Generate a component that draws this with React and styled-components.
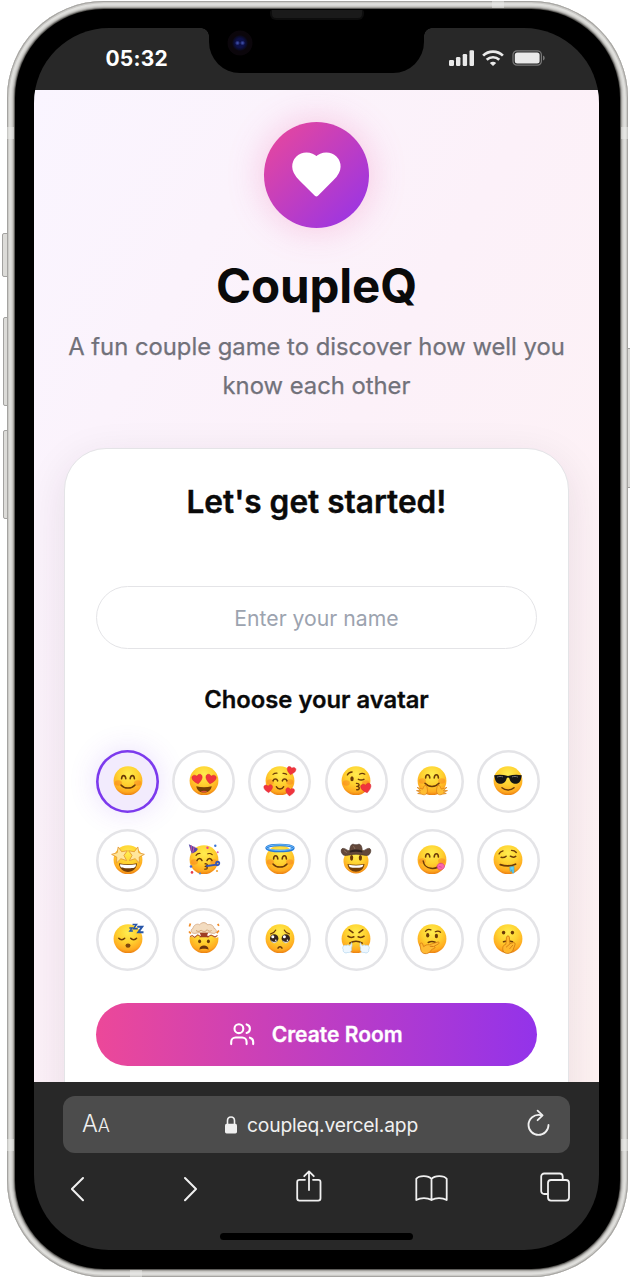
import React from "react";
import styled, { createGlobalStyle, css } from "styled-components";
import { Users } from "lucide-react";

const GlobalStyle = createGlobalStyle`
  *, *::before, *::after { box-sizing: border-box; }
  html, body { margin: 0; background: #fff; }
  body { font-family: Inter, "Liberation Sans", sans-serif; color: #0a0a0a; overflow: hidden; }
  svg { display: block; flex: none; }
`;

/* ---------- Device ---------- */

const Stage = styled.div`
  position: relative;
  width: 630px;
  height: 1277px;
  padding: 1px 0 0 7px;
  overflow: hidden;
`;

const Chassis = styled.div`
  position: relative;
  width: 621px;
  height: 1275.5px;
  padding: 8px;
  border-radius: 97px;
  background: #d6d5d2;
  box-shadow: inset 0 0 0 1px #a5a4a1, inset 0 0 0 2.2px #cbcac7,
    inset 0 0 2px 4.5px #e2e2df, inset 0 0 0 7px #cccbc8;
`;

const Bezel = styled.div`
  width: 100%;
  height: 100%;
  padding: 19px 20px 18.5px 19px;
  border-radius: 89px;
  background: #000;
  box-shadow: 0 0 2px 0.5px #33322f;
`;

const SideKey = styled.div`
  position: absolute;
  left: ${(p) => p.$x}px;
  top: ${(p) => p.$y}px;
  width: 7px;
  height: ${(p) => p.$h}px;
  border: 1px solid #a3a2a0;
  border-radius: 2px;
  background: #dcdbd8;
`;

const Seam = styled.div`
  position: absolute;
  left: ${(p) => p.$x}px;
  top: ${(p) => p.$y}px;
  width: ${(p) => p.$w || 7}px;
  height: ${(p) => p.$h || 12}px;
  background: rgba(235, 235, 233, 0.5);
`;

const Screen = styled.div`
  position: relative;
  display: flex;
  flex-direction: column;
  width: 565px;
  height: 1222px;
  border-radius: 75px;
  overflow: hidden;
  background: #282828;
`;

const Speaker = styled.div`
  position: absolute;
  left: 263px;
  top: 9px;
  width: 94px;
  height: 10px;
  border: 2px solid #0d0d0d;
  border-top: 0;
  border-radius: 2px 2px 6px 6px;
  background: #1a1a1a;
`;

const Notch = styled.div`
  position: absolute;
  left: 175px;
  top: -1px;
  width: 215px;
  height: 46px;
  border-radius: 0 0 31px 31px;
  background: #000;

  &::before,
  &::after {
    content: "";
    position: absolute;
    top: 1px;
    width: 8px;
    height: 8px;
  }
  &::before {
    left: -8px;
    background: radial-gradient(circle at 0 100%, transparent 7.5px, #000 8px);
  }
  &::after {
    right: -8px;
    background: radial-gradient(circle at 100% 100%, transparent 7.5px, #000 8px);
  }
`;

const Camera = styled.div`
  position: absolute;
  left: 18px;
  top: 3px;
  width: 26px;
  height: 26px;
  border-radius: 50%;
  background: radial-gradient(circle at 10.5px 13px, #3948a0 0 0.6px, transparent 2.5px),
    radial-gradient(circle at 15.5px 13px, #3948a0 0 0.6px, transparent 2.5px),
    radial-gradient(circle, #0d1048 0 4.5px, #0a0a20 7px, #0b060b 8px 12px, #000 13px);
`;

/* ---------- Status bar ---------- */

const StatusBar = styled.div`
  display: flex;
  justify-content: space-between;
  flex: none;
  height: 62px;
  padding: 18px 53px 0 71.5px;
`;

const Clock = styled.div`
  font-size: 21px;
  line-height: 26px;
  font-weight: 650;
  letter-spacing: 0.2px;
  color: #fff;
`;

const StatusIcons = styled.div`
  display: flex;
  align-items: flex-start;
  gap: 7px;
  padding-top: 4px;

  svg:last-child { margin-left: 1.5px; }
`;

/* ---------- Web page ---------- */

const Page = styled.main`
  display: flex;
  flex-direction: column;
  align-items: center;
  flex: none;
  height: 992px;
  padding: 32px 30px 0;
  overflow: hidden;
  background: linear-gradient(to bottom right, #faf5ff, #fcf1f9 45%, #fef2f2);
`;

const Logo = styled.div`
  display: grid;
  place-items: center;
  flex: none;
  width: 105.5px;
  height: 105.5px;
  border-radius: 50%;
  background: linear-gradient(135deg, #ec4899, #9333ea);
  box-shadow: 0 0 36px rgba(236, 72, 153, 0.28);

  svg { margin-top: -1px; }
`;

const Title = styled.h1`
  margin: 31px 0 0;
  font-size: 47.5px;
  line-height: 53px;
  font-weight: 700;
  letter-spacing: -0.15px;
`;

const Tagline = styled.p`
  width: 505px;
  margin: 15.5px 0 0;
  font-size: 23.8px;
  line-height: 39px;
  text-align: center;
  color: #71717a;
  -webkit-text-stroke: 0.25px #71717a;
`;

const Card = styled.section`
  display: flex;
  flex-direction: column;
  align-items: center;
  flex: none;
  width: 505px;
  height: 760px;
  margin-top: 42.5px;
  padding: 32px 31px 0;
  border: 1px solid #e4e4e7;
  border-radius: 42px;
  background: #fff;
  box-shadow: 0 11px 42px rgba(50, 25, 50, 0.1);
`;

const CardTitle = styled.h2`
  margin: 0;
  font-size: 31.6px;
  line-height: 42px;
  font-weight: 600;
  -webkit-text-stroke: 0.4px #0a0a0a;
`;

const NameInput = styled.input`
  flex: none;
  width: 441px;
  height: 63px;
  margin-top: 63.5px;
  border: 1.3px solid #e4e4e7;
  border-radius: 32px;
  outline: 0;
  background: #fff;
  font: 400 21.2px Inter, sans-serif;
  text-align: center;

  &::placeholder {
    color: #9ca3af;
    opacity: 1;
  }
`;

const Label = styled.h3`
  margin: 34px 0 32.5px;
  font-size: 23.8px;
  line-height: 34px;
  font-weight: 600;
  -webkit-text-stroke: 0.3px #0a0a0a;
`;

const AvatarGrid = styled.div`
  display: grid;
  grid-template-columns: repeat(6, 63px);
  gap: 16px 13.2px;
  align-self: flex-start;
`;

const Avatar = styled.button`
  display: grid;
  place-items: center;
  width: 63px;
  height: 63px;
  padding: 0;
  border: 0;
  border-radius: 50%;
  background: #fff;
  box-shadow: inset 0 0 0 2.6px #e4e4e7;
  ${(p) =>
    p.$selected &&
    css`
      background: #f2ebfd;
      box-shadow: inset 0 0 0 2.6px #7c3aed, 0 0 28px rgba(124, 58, 237, 0.17);
    `}
`;

const CreateButton = styled.button`
  display: flex;
  align-items: center;
  justify-content: center;
  flex: none;
  gap: 16px;
  width: 441px;
  height: 63px;
  margin-top: 32.5px;
  padding: 0 1px 0 0;
  border: 0;
  border-radius: 32px;
  background: linear-gradient(to right, #ec4899, #9333ea);
  color: #fff;
  font: 600 21px Inter, sans-serif;
  -webkit-text-stroke: 0.3px #fff;
`;

/* ---------- Browser chrome ---------- */

const Browser = styled.footer`
  display: flex;
  flex-direction: column;
  flex: none;
  height: 168px;
  padding: 14px 29px 0;
  color: #f0f0f0;
`;

const AddressBar = styled.div`
  display: flex;
  align-items: center;
  flex: none;
  width: 507px;
  height: 57px;
  padding: 0 20px 0 19px;
  border-radius: 12px;
  background: #4c4c4c;
`;

const TextSize = styled.div`
  width: 143px;
  font-size: 23.5px;
  line-height: 30px;
  font-weight: 350;

  span { font-size: 18px; }
`;

const Url = styled.div`
  flex: 1;
  margin-left: 10px;
  font-size: 19.3px;
  line-height: 28px;
  letter-spacing: -0.2px;
  padding-top: 1px;
`;

const Toolbar = styled.nav`
  display: flex;
  align-items: flex-start;
  height: 80px;
  padding: 16px 0 0 5px;
`;

const Tool = styled.div`
  width: ${(p) => p.$w}px;
  flex: none;
  svg { margin: 0 auto; }
`;

const HomeIndicator = styled.div`
  flex: none;
  width: 193px;
  height: 7px;
  margin-left: 157px;
  border-radius: 4px;
  background: #000;
`;

/* ---------- Avatar faces (34 x 34, face centred on 17,16.5) ---------- */

const brown = "#6b3a08";

const Line = ({ d, w = 1.5, c = brown }) => (
  <path d={d} fill="none" stroke={c} strokeWidth={w} strokeLinecap="round" strokeLinejoin="round" />
);
const HeartShape = ({ x, y, s = 1, r = 0 }) => (
  <path
    transform={`translate(${x} ${y}) rotate(${r}) scale(${s})`}
    d="M0 4.6C-3 2.4-4.8.5-4.6-1.7-4.3-4-1.3-4.4 0-2.2 1.3-4.4 4.3-4 4.6-1.7 4.8.5 3 2.4 0 4.6Z"
    fill="#f0353d"
    stroke="#d81f30"
    strokeWidth=".4"
  />
);
const Blush = ({ y = 19 }) => (
  <g fill="#f7701d" opacity=".38">
    <ellipse cx="7.3" cy={y} rx="3.6" ry="2.7" />
    <ellipse cx="26.7" cy={y} rx="3.6" ry="2.7" />
  </g>
);
const HappyEyes = ({ y = 14.8 }) => (
  <>
    <Line d={`M10.6 ${y}c.2-4.3 3.8-4.3 4.2 0`} w={1.6} />
    <Line d={`M19.2 ${y}c.4-4.3 4-4.3 4.2 0`} w={1.6} />
  </>
);
const DotEyes = ({ y = 13, rx = 1.5, ry = 2.2 }) => (
  <g fill={brown}>
    <ellipse cx="12.6" cy={y} rx={rx} ry={ry} />
    <ellipse cx="21.4" cy={y} rx={rx} ry={ry} />
  </g>
);
const Smile = ({ y = 21 }) => <Line d={`M10 ${y}c3.4 4.1 10.6 4.1 14 0`} />;
const Star = ({ x, y, r }) => (
  <path
    transform={`translate(${x} ${y}) rotate(${r}) scale(1.15)`}
    d="M0-7 2-2.3 7-2 3.2 1.3 4.5 6.2 0 3.5-4.5 6.2-3.2 1.3-7-2-2-2.3Z"
    fill="#ffe69c"
    stroke="#e59a35"
    strokeWidth=".7"
    strokeLinejoin="round"
  />
);

const FACES = {
  blush: <><Blush /><HappyEyes /><Smile /></>,
  heartEyes: (
    <>
      <HeartShape x={10.3} y={14.8} s={1.12} r={-10} />
      <HeartShape x={23.8} y={14.8} s={1.12} r={10} />
      <path d="M9.3 22.3c4.8 1.2 10.6 1.2 15.4 0-.6 4.2-3.8 6.3-7.7 6.3s-7.1-2.1-7.7-6.3Z" fill="#754006" />
      <path d="M13.5 27.4c2-.9 5-.9 7 0-2.2 1.400-4.800 1.400-7 0Z" fill="#d9503c" />
    </>
  ),
  hearts: (
    <>
      <Blush y={18} />
      <Line d="M10 10.4c1-.9 2.5-1.4 4-1.3M20 9.3c1.3-.1 2.6.3 3.6 1" w={1.2} />
      <Line d="M10 16.9c1-2.5 3.7-2.5 4.7 0M19.3 16.9c1-2.5 3.7-2.5 4.7 0" />
      <Line d="M13.4 22.7c1.4 3 5.8 3 7.2 0" />
      <HeartShape x={28.3} y={6.4} s={0.95} r={12} />
      <HeartShape x={5.3} y={24.3} s={0.95} r={-5} />
      <HeartShape x={27} y={27.6} s={0.95} r={8} />
    </>
  ),
  kiss: (
    <>
      <Blush y={19} />
      <Line d="M8.3 11c.9-1.9 2.5-2.9 4.8-3" w={1.3} />
      <Line d="M20.5 10.2c1.7-1.1 3.6-1.1 5.3 0" w={1.2} />
      <ellipse cx="13" cy="14.8" rx="1.7" ry="2.5" fill={brown} />
      <Line d="M19.4 15.3c1.8.9 3.8.9 5.5 0" />
      <Line d="M17.5 19.4c3.4-.2 3.3 2.8.3 3 3.3.1 3.3 3.5-.1 3.4" w={1.4} />
      <HeartShape x={27.1} y={23.8} s={1.12} r={-12} />
    </>
  ),
  hug: (
    <>
      <Blush y={17} /><HappyEyes y={14} /><Smile y={19.3} />
      <g fill="#ffbd32" stroke="#d87c12" strokeWidth=".7" strokeLinecap="round">
        <path d="M10.8 21c-2 .2-2.1 2.4-3.1 4.1l-5.6-1.7 3.4 3.1-4 .1 4 1.7-2.8 1.2 4.2.7c3.7 1.8 6-1.1 5.5-4.4-.3-1.8-.1-3.5-1.6-4.8Z" />
        <path d="M23.2 21c2 .2 2.1 2.4 3.1 4.1l5.6-1.7-3.4 3.1 4 .1-4 1.7 2.8 1.2-4.2.7c-3.7 1.8-6-1.1-5.5-4.4.3-1.8.1-3.5 1.6-4.8Z" />
      </g>
    </>
  ),
  cool: (
    <>
      <path d="M3.2 11.2c4.8-1 9.2-.6 13.8.7 4.6-1.3 9-1.7 13.8-.7l-.4 2c-1 5.4-3.3 6.9-6.8 6.6-3.3-.3-4.7-2.8-5.4-5.7-.3-.9-2.1-.9-2.4 0-.7 2.9-2.1 5.4-5.4 5.7-3.5.3-5.8-1.2-6.8-6.6Z" fill="#151515" />
      <path d="M6 13.1c2-.8 4-.8 6-.2M21 12.9c2-.6 4-.6 6 .2" stroke="#727272" fill="none" />
      <Line d="M11 23.8c3.2 2.8 8.8 2.8 12 0" />
    </>
  ),
  starEyes: (
    <>
      <path d="M8 20.3c5.5 1.2 12.5 1.2 18 0-.2 5.200-4 8.700-9 8.700s-8.800-3.500-9-8.700Z" fill="#713d08" />
      <path d="M9 21.2c5.3 1 10.7 1 16 0 0 3.5-1.5 4-8 4s-8-.5-8-4Z" fill="#fff" />
      <Star x={9} y={11.8} r={-13} /><Star x={25} y={11.8} r={13} />
    </>
  ),
  party: (
    <>
      <Blush y={19} />
      <Line d="M9 12.3c1-1.4 2.4-2 4-1.8M20.8 10.8c1.7-.6 3.2-.3 4.4.8" w={1.2} />
      <Line d="M10 17.5c1-2.7 4-2.7 5 0M20 17.5c1-2.7 4-2.7 5 0" />
      <path d="m1.8 1.2 9.1 4.6c-.9 2.4-3.1 4.1-6.2 4.8Z" fill="#5546a8" />
      <path d="m4.3 2.4-.2 5.4M7.2 3.7l-1.5 6" stroke="#d9559a" strokeWidth="1" />
      <Line d="M18 20.8c3-.3 3 2.2.2 2.6 2.9.2 2.8 3-.4 2.8" w={1.3} />
      <path d="m20 23 9.5-1.4M29.4 21.6c-2-4 4.4-3.5 2.6-.4-.5 1-1.9 1.3-2.8.8" stroke="#3655b6" strokeWidth="1.8" fill="none" strokeLinecap="round" />
      <g>
        <circle cx="28.3" cy="2.8" r="1.2" fill="#3d75d8" /><circle cx="20.5" cy="4.8" r="1.2" fill="#e6438e" />
        <circle cx="30.7" cy="9.3" r="1" fill="#e25da0" /><circle cx="4" cy="23.5" r="1.3" fill="#3d66d8" />
        <circle cx="5" cy="29.4" r="1.3" fill="#e83e4f" /><circle cx="13" cy="30.5" r="1" fill="#448be0" />
        <circle cx="30" cy="28" r="1.1" fill="#f2a43c" />
      </g>
    </>
  ),
  angel: (
    <>
      <Blush /><HappyEyes y={16} /><Smile y={21} />
      <ellipse cx="17" cy="5" rx="13.4" ry="3.1" fill="none" stroke="#287bd8" strokeWidth="2.5" />
      <ellipse cx="17" cy="4.6" rx="13.4" ry="2.8" fill="none" stroke="#78c7ff" strokeWidth=".9" />
    </>
  ),
  cowboy: (
    <>
      <DotEyes y={14.8} rx={1.6} ry={2.9} />
      <path d="M8.5 21c5.3 1.1 11.7 1.1 17 0-.6 5-4 7.700-8.500 7.700S9.100 26 8.500 21Z" fill="#713d08" />
      <path d="M9.7 21.8c5 .9 9.6.9 14.6 0-.4 2.7-1.9 3-7.3 3s-6.9-.3-7.3-3Z" fill="#fff" />
      <path d="M10.7 8c.3-4.7 1.4-7 3.8-6.7 1.8.7 3.2.7 5 0 2.4-.3 3.5 2 3.8 6.7 3-.6 3.7-2.3 6.4-2.6 2.2-.1 2.6 2.4 1.5 4.6C29 14.7 25 11.2 17 11.2S5 14.7 2.8 10c-1.1-2.2-.7-4.7 1.5-4.6C7 5.7 7.7 7.4 10.7 8Z" fill="#63483a" stroke="#49352d" strokeWidth=".7" />
      <path d="M10.8 7.8c4-1.6 8.4-1.6 12.4 0v1.8c-4-1.1-8.4-1.1-12.4 0Z" fill="#30231f" />
      <path d="M14.5 3.2 16 6M5 7.6l2.8 2" stroke="#8b6d5b" />
    </>
  ),
  yum: (
    <>
      <Blush y={18} /><HappyEyes y={14} />
      <Line d="M8.2 18c1.4 8.8 13.2 9.8 17.4 3" />
      <path d="M22.2 24.3c-.6-1.5.6-4.1 3.7-4.1 3.2.1 4.8 3.1 2.5 5.4-2.4 2.3-5.8 1.2-6.2-1.3Z" fill="#fa66ae" stroke="#d83b84" strokeWidth=".6" />
      <Line d="m24.2 23.5 2.2.7" w={0.7} c="#d83b84" />
    </>
  ),
  drool: (
    <>
      <Line d="M8 11c.7-1.900 2.100-2.900 4-3.200M20.500 7.300c2 0 3.700.700 4.800 2.200" w={1.3} />
      <Line d="M10.200 14.300c1.800.500 3.500.200 4.900-1.100M19.400 13.200c1.700 1.100 3.700 1.200 5.300.2" />
      <Line d="M9.300 21.600c5 1.700 10.500 1.700 15.200-.400" w={1.8} />
      <path d="M18.800 24c1.500-.400 2.900-.600 4.200-.6v5.600c0 1.500-1.600 1.600-1.900.2l-.3-2.600-.2 1.200c-.3 1-1.500.8-1.500-.2Z" fill="#68d0f4" stroke="#2899cc" strokeWidth=".5" />
    </>
  ),
  sleep: (
    <>
      <Line d="M7.8 16.2c1.6 1.9 4.3 1.9 5.9 0M19.7 16.2c1.6 1.9 4.3 1.9 5.9 0" />
      <ellipse cx="17" cy="23.6" rx="2.5" ry="2.2" fill="#80480d" />
      <g fill="none" stroke="#2655a8" strokeLinecap="square">
        <path d="M19 6h2.2L18.8 9h2.4" strokeWidth="1.3" />
        <path d="M22.3 2.4h3.2L22.5 6.7h3.4" strokeWidth="1.5" />
        <path d="M27.2 4.8h4l-3.9 5.4h4.2" strokeWidth="2" />
      </g>
    </>
  ),
  mindBlown: (
    <>
      <path d="M1 0h32v14.5L28.6 16l-4.2-2.4-3.1 1.7-3.6-2.3-4.1 2-2.8-2-3.2 2.7L3 14 1 16Z" fill="#fff" />
      <path d="m3.2 14.5 2-.9 2.4 1.8 3.2-2.5 3 1.8 3.8-1.9 3.3 2 3.2-1.8 4 2 2.4-1.6" fill="none" stroke="#b0521b" strokeWidth="1.1" />
      <path d="M12.5 10.5h8.8l-1.2 2.8 1.8 2h-9.7l1.7-1.8Z" fill="#9e3e24" />
      <path d="M7.7 11.4C3.8 11.5 3 7.5 6 6.4 6.4 3 10 1.2 12.6 2.7c2.6-3.1 6.4-2.5 8 .1 3-1 6 .5 6.4 3.5 3.4 1 3 5.3-.5 5.1-6.2-1.3-12.6-1.3-18.8 0Z" fill="#f3dcc0" stroke="#cf9c72" strokeWidth=".7" />
      <path d="M9 8.5c2 1.5 4 1.1 5-.5 2 2 4.8 1.9 6.1-.3 1 1.6 3 2 4.5.8" fill="none" stroke="#d1a06e" />
      <path d="m3.4 1.5-1 3M30.8 1.8l1 2M2 9.5l1.8 2M31.9 8.5l-2.2 2.6" stroke="#f28a24" strokeWidth="1.7" />
      <DotEyes y={19.3} rx={1.5} ry={1.9} />
      <path d="M12.4 27.7c0-5.6 9.2-5.6 9.2 0-2-1.2-7.2-1.2-9.2 0Z" fill="#6b340b" />
    </>
  ),
  pleading: (
    <>
      <Line d="M7.7 11.8c2.3-.5 3.9-1.7 4.9-3.6M21.4 8.2c1 1.9 2.6 3.1 4.9 3.6" w={1.3} />
      <g fill="#35251f"><circle cx="11.2" cy="16.5" r="4.2" /><circle cx="22.8" cy="16.5" r="4.2" /></g>
      <g fill="#fff">
        <circle cx="9.8" cy="14.8" r="1.5" /><circle cx="12.8" cy="18.3" r=".8" />
        <circle cx="21.4" cy="14.8" r="1.5" /><circle cx="24.4" cy="18.3" r=".8" />
        <path d="M7.6 18c2.2 2.2 4.7 2.5 7 .4-1.4 4-6 3.4-7-.4ZM19.3 18c2.2 2.2 4.7 2.5 7 .4-1.4 4-6 3.4-7-.4Z" opacity=".75" />
      </g>
      <Line d="M15 26.1c1-1.7 3-1.7 4 0" />
    </>
  ),
  huff: (
    <>
      <Line d="M10.2 7.8 14 10.6M23.8 7.8 20 10.6" w={1.6} />
      <Line d="M8.9 14.2c1.7 1.4 3.8 1.6 6 .6M25.1 14.2c-1.7 1.4-3.8 1.6-6 .6" />
      <Line d="M10.7 21.2c4-2.5 8.6-2.5 12.6 0" />
      <g fill="#edf7ff" stroke="#b2d4ee" strokeWidth=".7">
        <path d="M12.6 20.6c.8 2.6.4 4.3-.3 5.5 1 2.8-1.3 5-3.5 4.3-2.5 1.4-5.2-.4-4.5-2.7-1.8-2.7.6-5 3-4.2.8-1 2.9-.7 3 .3 1-.4 1.8-1.4 2.3-3.2Z" />
        <path d="M21.4 20.6c-.8 2.6-.4 4.3.3 5.5-1 2.8 1.3 5 3.5 4.3 2.5 1.4 5.2-.4 4.5-2.7 1.8-2.7-.6-5-3-4.2-.8-1-2.9-.7-3 .3-1-.4-1.8-1.4-2.300-3.200Z" />
      </g>
    </>
  ),
  think: (
    <>
      <Line d="M10.5 9.3c1.5-1.8 3.5-2.3 5.4-1.4M20.3 9.8c1.8-1 3.8-.8 5.3.4" w={1.3} />
      <g fill={brown}><ellipse cx="12.7" cy="13.3" rx="1.6" ry="2.3" /><ellipse cx="21.4" cy="14" rx="1.6" ry="2.3" /></g>
      <Line d="M13.2 20.5c2.4-1.2 5-1.2 7.4 0" />
      <path d="M7.3 21.3c-1.4-.8-2.7.1-2.4 1.7l1 5.3c.7 4 7 4.600 9.500.9.9-1.600 1.700-2 3.400-2.600 1.700-.5 1.500-2.100-.1-2.100l4.900-2.700c1.200-.9.4-2.100-1-1.700l-8.200 2.600c-2.400-.1-4 .3-5.700 2Z" fill="#ffbb34" stroke="#d57812" strokeWidth=".8" />
      <path d="m14.8 24.2 3.6.3" stroke="#d57812" />
    </>
  ),
  hush: (
    <>
      <DotEyes y={10.6} rx={1.7} ry={1.9} />
      <Line d="M12.5 19.8c3-1 6-1 9 0" />
      <path d="M15.5 15.3c.3-1.9 2.7-1.9 2.9 0l.5 6.3 3.3-1.1c1.4-.3 2.3 1 1.8 2.3l-2.1 5.5c-1.6 4-8.6 4.2-9.8.5-.9-3-.2-5.8 2.7-6.5Z" fill="#ffb82d" stroke="#ce7610" strokeWidth=".8" />
      <path d="m15 25.3 4.3-3.7M18.5 27l3.4-4" stroke="#ce7610" strokeWidth=".8" />
    </>
  ),
};

const Emoji = ({ name }) => (
  <svg width="34" height="34" viewBox="0 0 34 34">
    <defs>
      <radialGradient id={`skin-${name}`} cx=".5" cy=".28" r=".74">
        <stop offset="0" stopColor="#ffec4f" />
        <stop offset=".48" stopColor="#ffd12f" />
        <stop offset=".83" stopColor="#ffaa20" />
        <stop offset="1" stopColor="#e7780e" />
      </radialGradient>
    </defs>
    <circle
      cx="17"
      cy={name === "cowboy" ? 18 : 16.7}
      r={name === "cowboy" ? 12.5 : 14.4}
      fill={`url(#skin-${name})`}
    />
    {FACES[name]}
  </svg>
);

const AVATARS = [
  "blush", "heartEyes", "hearts", "kiss", "hug", "cool",
  "starEyes", "party", "angel", "cowboy", "yum", "drool",
  "sleep", "mindBlown", "pleading", "huff", "think", "hush",
];

/* ---------- Icons ---------- */

const Signal = () => (
  <svg width="26" height="16" viewBox="0 0 26 16" fill="#e9e9e9">
    <rect x="0" y="10" width="5" height="6" rx="1.2" />
    <rect x="7" y="7" width="4.4" height="9" rx="1.2" />
    <rect x="13.7" y="4" width="4.4" height="12" rx="1.2" />
    <rect x="20.5" y="0.3" width="4.5" height="15.7" rx="1.2" />
  </svg>
);
const Wifi = () => (
  <svg width="22" height="16" viewBox="0 0 22 16" fill="none" stroke="#e9e9e9" strokeWidth="2.7">
    <path d="M1.1 5.6c5.5-5.4 14.3-5.4 19.8 0" />
    <path d="M4.7 9.8c3.6-3.4 9-3.4 12.6 0" />
    <path d="M11 16 7.8 12.9c1.8-1.7 4.6-1.7 6.4 0Z" fill="#e9e9e9" stroke="none" />
  </svg>
);
const Battery = () => (
  <svg width="34" height="16" viewBox="0 0 34 16">
    <rect x="1" y=".8" width="28.4" height="14.4" rx="4" fill="none" stroke="#777" strokeWidth="1.2" />
    <rect x="2.8" y="2.5" width="24.8" height="11" rx="2.5" fill="#e9e9e9" />
    <path d="M31 5.5c2.3.8 2.3 4.2 0 5Z" fill="#777" />
  </svg>
);
const Heart = () => (
  <svg width="52.8" height="52.8" viewBox="0 0 24 24" fill="#fff" stroke="#fff" strokeWidth="2" strokeLinejoin="round">
    <path d="M19 14c1.49-1.46 3-3.21 3-5.5A5.5 5.5 0 0 0 16.5 3c-1.76 0-3 .5-4.5 2-1.5-1.5-2.74-2-4.5-2A5.5 5.5 0 0 0 2 8.5c0 2.3 1.5 4.05 3 5.5l7 7Z" />
  </svg>
);
const Lock = () => (
  <svg width="12" height="18" viewBox="0 0 12 18">
    <rect x="0" y="7.8" width="12" height="9.6" rx="1.6" fill="#f0f0f0" />
    <path d="M2.5 8.5V4.8c0-5 7-5 7 0v3.7" fill="none" stroke="#f0f0f0" strokeWidth="1.6" />
  </svg>
);

const StrokeIcon = styled.svg.attrs({ fill: "none", stroke: "#f0f0f0", strokeLinecap: "round", strokeLinejoin: "round" })`
  stroke-width: ${(p) => p.$weight || 1.8};
`;
const ReloadIcon = styled(StrokeIcon)`
  margin-top: -4px;
`;
const Reload = () => (
  <ReloadIcon width="23" height="28" viewBox="0 0 23 28">
    <path d="M14 6.200C7 4.700 1.500 9.800 1.500 16c0 5.500 4.500 9.900 10 9.900s10-4.400 10-9.900" />
    <path d="m10.6 1.700 5 4.700-5 4.800" />
  </ReloadIcon>
);

const Chevron = ({ d }) => (
  <StrokeIcon width="13" height="36" viewBox="0 0 13 36" $weight={2}>
    <path d={d} />
  </StrokeIcon>
);

export default function App() {
  return (
    <Stage>
      <GlobalStyle />
      <SideKey $x={2} $y={233} $h={44} />
      <SideKey $x={3} $y={317} $h={89} />
      <SideKey $x={3} $y={430} $h={89} />
      <SideKey $x={626} $y={348} $h={140} />
      <Chassis>
        <Seam $x={0} $y={126} />
        <Seam $x={614} $y={126} />
        <Seam $x={0} $y={1138} />
        <Seam $x={614} $y={1138} />
        <Seam $x={123} $y={1268.5} $w={12} $h={7} />
        <Seam $x={485} $y={0} $w={12} $h={7} />
        <Bezel>
          <Speaker />
          <Screen>
            <StatusBar>
              <Clock>05:32</Clock>
              <StatusIcons>
                <Signal />
                <Wifi />
                <Battery />
              </StatusIcons>
            </StatusBar>
            <Page>
              <Logo><Heart /></Logo>
              <Title>CoupleQ</Title>
              <Tagline>A fun couple game to discover how well you know each other</Tagline>
              <Card>
                <CardTitle>Let's get started!</CardTitle>
                <NameInput placeholder="Enter your name" />
                <Label>Choose your avatar</Label>
                <AvatarGrid>
                  {AVATARS.map((name, i) => (
                    <Avatar key={name} $selected={i === 0} aria-label={name}>
                      <Emoji name={name} />
                    </Avatar>
                  ))}
                </AvatarGrid>
                <CreateButton>
                  <Users size={26.4} strokeWidth={1.9} />
                  Create Room
                </CreateButton>
              </Card>
            </Page>
            <Browser>
              <AddressBar>
                <TextSize>A<span>A</span></TextSize>
                <Lock />
                <Url>coupleq.vercel.app</Url>
                <Reload />
              </AddressBar>
              <Toolbar>
                <Tool $w={19}><Chevron d="M12 9 .9 20 12 31.200" /></Tool>
                <Tool $w={207}><Chevron d="M1 9 12 20 1 31.200" /></Tool>
                <Tool $w={29}>
                  <StrokeIcon width="26" height="36" viewBox="0 0 26 36">
                    <path d="M9 10.8H3.5a2.3 2.3 0 0 0-2.3 2.3v16.2a2.3 2.3 0 0 0 2.3 2.3h18.7a2.3 2.3 0 0 0 2.3-2.3V13.1a2.3 2.3 0 0 0-2.3-2.3H17" />
                    <path d="M13 21V2.500M8.200 7.200 13 2.400l4.800 4.800" />
                  </StrokeIcon>
                </Tool>
                <Tool $w={217}>
                  <StrokeIcon width="33" height="36" viewBox="0 0 33 36">
                    <path d="M16.5 9.9C13.500 6.500 4.400 6 1.300 9.900v21.200c4.500-2.700 11-2.600 15.200 0 4.200-2.600 10.700-2.700 15.200 0V9.900C28.600 6 19.500 6.500 16.500 9.900Zm0 0v21.200" />
                  </StrokeIcon>
                </Tool>
                <Tool $w={26}>
                  <StrokeIcon width="30" height="36" viewBox="0 0 30 36">
                    <rect x="8" y="11" width="21" height="20.600" rx="3" />
                    <path d="M7.500 25H4.200a3 3 0 0 1-3-3V7.500a3 3 0 0 1 3-3h15.500a3 3 0 0 1 3 3V11" />
                  </StrokeIcon>
                </Tool>
              </Toolbar>
              <HomeIndicator />
            </Browser>
            <Notch><Camera /></Notch>
          </Screen>
        </Bezel>
      </Chassis>
    </Stage>
  );
}
